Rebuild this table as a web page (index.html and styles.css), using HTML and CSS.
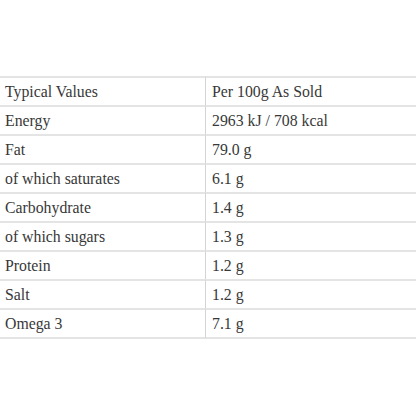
FILE: index.html
```html
<!DOCTYPE html>
<html>
<head>
<meta charset="utf-8">
<link rel="stylesheet" href="styles.css">
</head>
<body>
<table class="nutrition">
  <colgroup><col class="c1"><col class="c2"></colgroup>
  <tbody>
    <tr><td>Typical Values</td><td>Per 100g As Sold</td></tr>
    <tr><td>Energy</td><td>2963 kJ / 708 kcal</td></tr>
    <tr><td>Fat</td><td>79.0 g</td></tr>
    <tr><td>of which saturates</td><td>6.1 g</td></tr>
    <tr><td>Carbohydrate</td><td>1.4 g</td></tr>
    <tr><td>of which sugars</td><td>1.3 g</td></tr>
    <tr><td>Protein</td><td>1.2 g</td></tr>
    <tr><td>Salt</td><td>1.2 g</td></tr>
    <tr><td>Omega 3</td><td>7.1 g</td></tr>
  </tbody>
</table>
</body>
</html>
```
FILE: styles.css
```css
html, body {
  margin: 0;
  padding: 0;
  background: #ffffff;
}
body {
  padding-top: 76px;
}
.nutrition {
  width: 416px;
  border-collapse: separate;
  border-spacing: 0;
  table-layout: fixed;
  font-family: "Liberation Serif", "Times New Roman", serif;
  font-size: 15.8px;
  color: #383838;
}
.c1 { width: 206px; }
.c2 { width: 210px; }
.nutrition td {
  padding: 0 0 0 5px;
  border-top: 2px solid #e4e4e4;
  vertical-align: middle;
  box-sizing: border-box;
  height: 29px;
  white-space: nowrap;
}
.nutrition td:first-child {
  border-right: 1px solid #d4d4d4;
}
.nutrition td + td {
  padding-left: 6px;
}
.nutrition tr:last-child td {
  border-bottom: 2px solid #e4e4e4;
  height: 31px;
}
```
